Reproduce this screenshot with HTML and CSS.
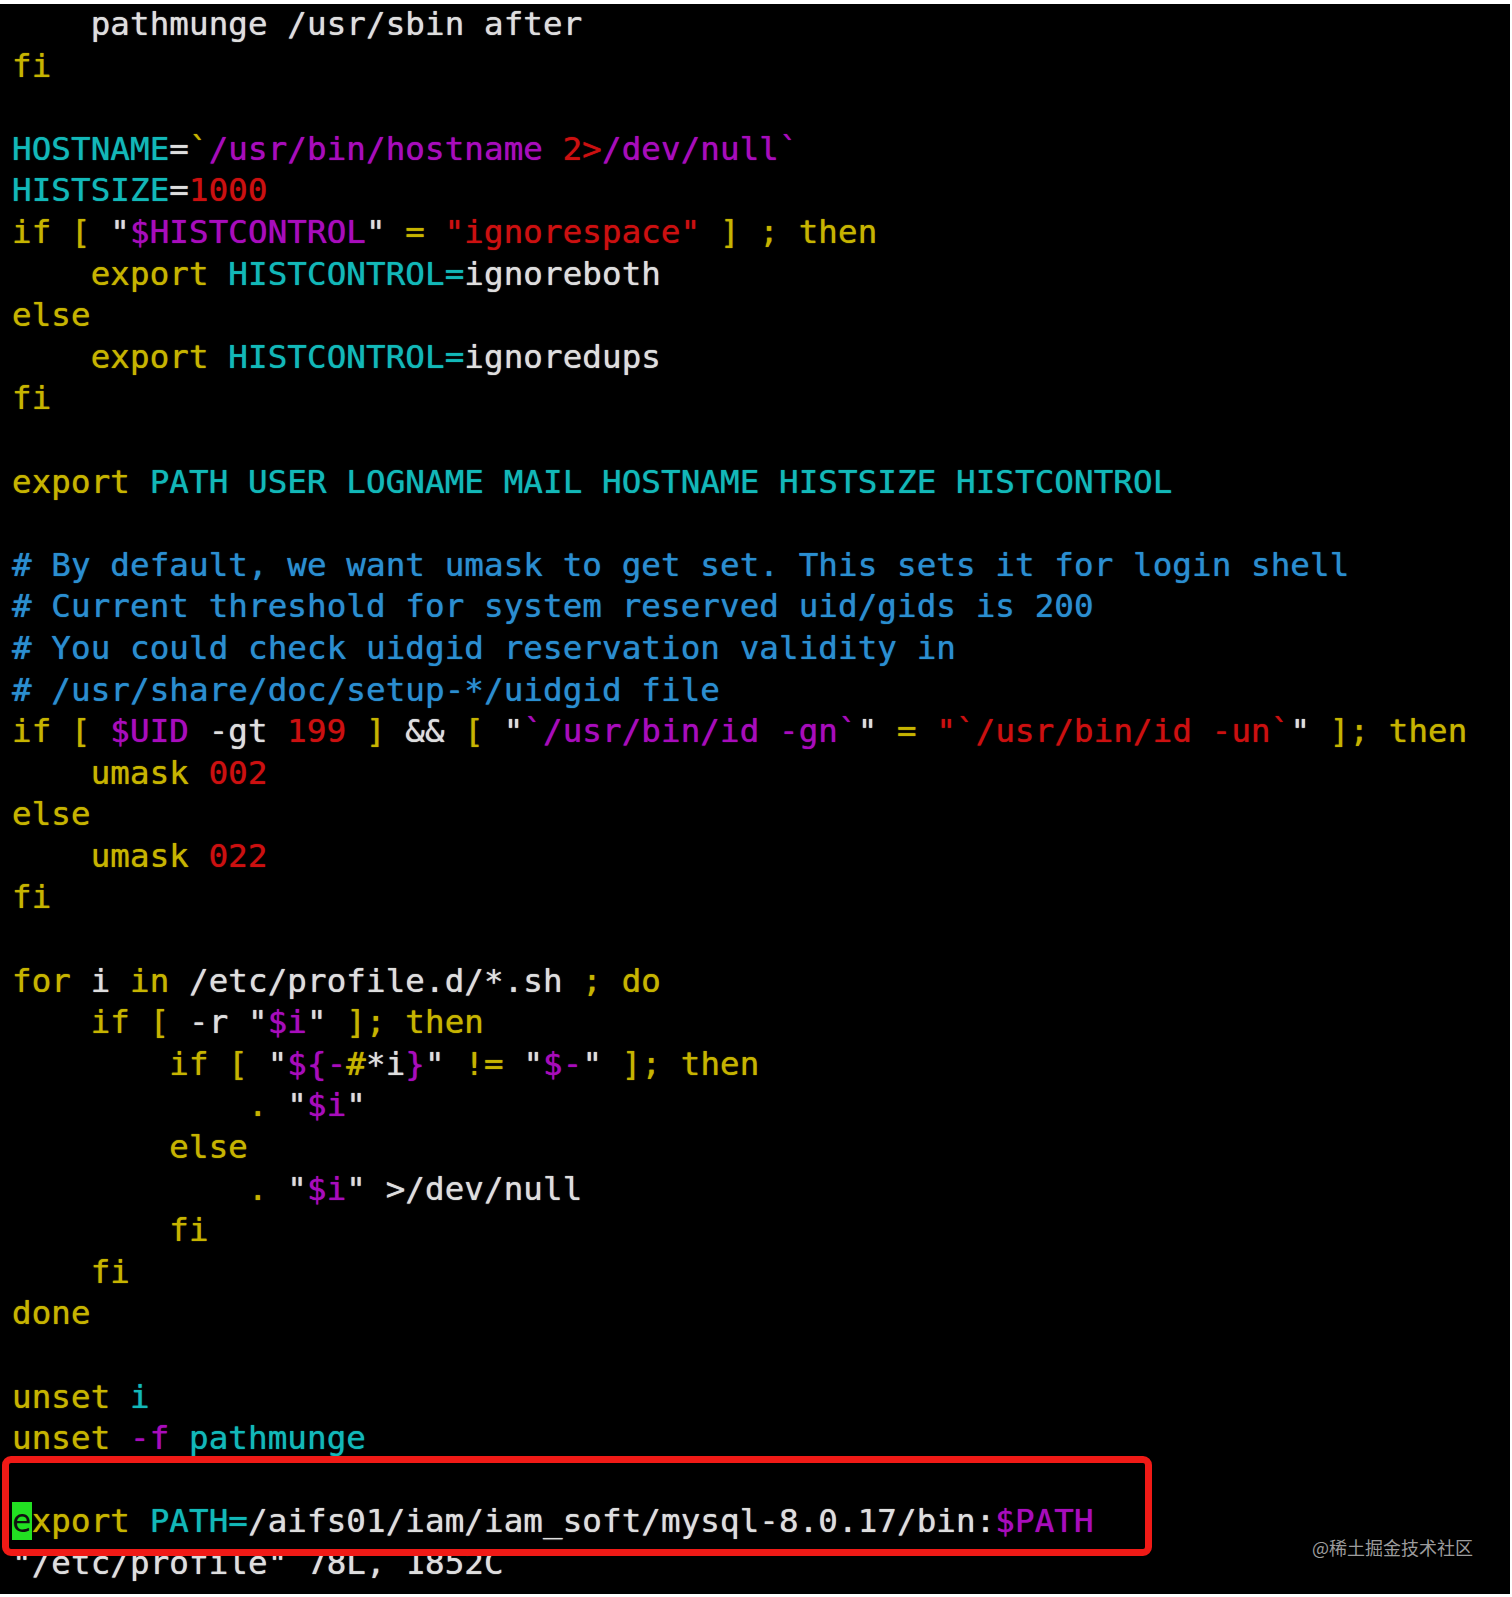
FILE: index.html
```html
<!DOCTYPE html>
<html lang="en">
<head>
	<meta charset="UTF-8">
	<title>/etc/profile</title>
	<link rel="stylesheet" href="styles.css">
</head>
<body>
	<div class="screen">
<pre class="code"><span class="w">    pathmunge /usr/sbin after</span>
<span class="k">fi</span>

<span class="c">HOSTNAME</span><span class="w">=</span><span class="k">`</span><span class="m">/usr/bin/hostname </span><span class="r">2&gt;</span><span class="m">/dev/null`</span>
<span class="c">HISTSIZE</span><span class="w">=</span><span class="r">1000</span>
<span class="k">if [ </span><span class="w">"</span><span class="m">$HISTCONTROL</span><span class="w">"</span> <span class="k">=</span> <span class="r">"ignorespace"</span><span class="k"> ] ; then</span>
<span class="k">    export </span><span class="c">HISTCONTROL=</span><span class="w">ignoreboth</span>
<span class="k">else</span>
<span class="k">    export </span><span class="c">HISTCONTROL=</span><span class="w">ignoredups</span>
<span class="k">fi</span>

<span class="k">export </span><span class="c">PATH USER LOGNAME MAIL HOSTNAME HISTSIZE HISTCONTROL</span>

<span class="b"># By default, we want umask to get set. This sets it for login shell</span>
<span class="b"># Current threshold for system reserved uid/gids is 200</span>
<span class="b"># You could check uidgid reservation validity in</span>
<span class="b"># /usr/share/doc/setup-*/uidgid file</span>
<span class="k">if [ </span><span class="m">$UID</span><span class="w"> -gt </span><span class="r">199</span><span class="k"> ] </span><span class="w">&amp;&amp;</span><span class="k"> [ </span><span class="w">"</span><span class="m">`/usr/bin/id -gn`</span><span class="w">"</span> <span class="k">=</span> <span class="r">"`/usr/bin/id -un`</span><span class="w">"</span><span class="k"> ]; then</span>
<span class="k">    umask </span><span class="r">002</span>
<span class="k">else</span>
<span class="k">    umask </span><span class="r">022</span>
<span class="k">fi</span>

<span class="k">for </span><span class="w">i</span><span class="k"> in </span><span class="w">/etc/profile.d/*.sh</span><span class="k"> ; do</span>
<span class="k">    if [ </span><span class="w">-r "</span><span class="m">$i</span><span class="w">"</span><span class="k"> ]; then</span>
<span class="k">        if [ </span><span class="w">"</span><span class="m">${-</span><span class="k">#</span><span class="w">*i</span><span class="m">}</span><span class="w">"</span> <span class="k">!=</span> <span class="w">"</span><span class="m">$-</span><span class="w">"</span><span class="k"> ]; then</span>
<span class="k">            . </span><span class="w">"</span><span class="m">$i</span><span class="w">"</span>
<span class="k">        else</span>
<span class="k">            . </span><span class="w">"</span><span class="m">$i</span><span class="w">" &gt;/dev/null</span>
<span class="k">        fi</span>
<span class="k">    fi</span>
<span class="k">done</span>

<span class="k">unset </span><span class="c">i</span>
<span class="k">unset </span><span class="m">-f</span> <span class="c">pathmunge</span>

<span class="cur">e</span><span class="k">xport </span><span class="c">PATH=</span><span class="w">/aifs01/iam/iam_soft/mysql-8.0.17/bin:</span><span class="m">$PATH</span>
<span class="w">"/etc/profile" 78L, 1852C</span></pre>
		<div class="mark"></div>
		<div class="watermark">@稀土掘金技术社区</div>
	</div>
</body>
</html>
```

FILE: styles.css
```css
body{
	margin: 0;padding: 0;background: #fff;
}
.screen{
	position: relative;overflow: hidden;
	margin: 4px 2px 0 0;height: 1590px;background: #000;
}
.code{
	margin: 0 0 0 12px;
	font-family: "DejaVu Sans Mono", monospace;font-size: 32.5px;line-height: 41.6px;letter-spacing: 0.1px;
	color: #e2e2e2;white-space: pre;
}
.code span{
	text-shadow: 0 0 1px currentColor;
}
.k{color: #c6b400;}
.w{color: #dedede;}
.c{color: #12b8b8;}
.m{color: #a80cbc;}
.r{color: #cc1010;}
.b{color: #2a8ed0;}
.code .cur{
	background: #22e022;color: #101010;text-shadow: none;
}
/* red annotation round the added line */
.mark{
	position: absolute;left: 2px;top: 1452px;
	width: 1136px;height: 86px;
	border: 7px solid #f01a16;border-radius: 9px;
}
.watermark{
	position: absolute;left: 1312px;top: 1531px;
	font-family: "Noto Sans CJK SC", sans-serif;font-size: 18px;line-height: 24px;
	color: #9c9c9c;
}
```
